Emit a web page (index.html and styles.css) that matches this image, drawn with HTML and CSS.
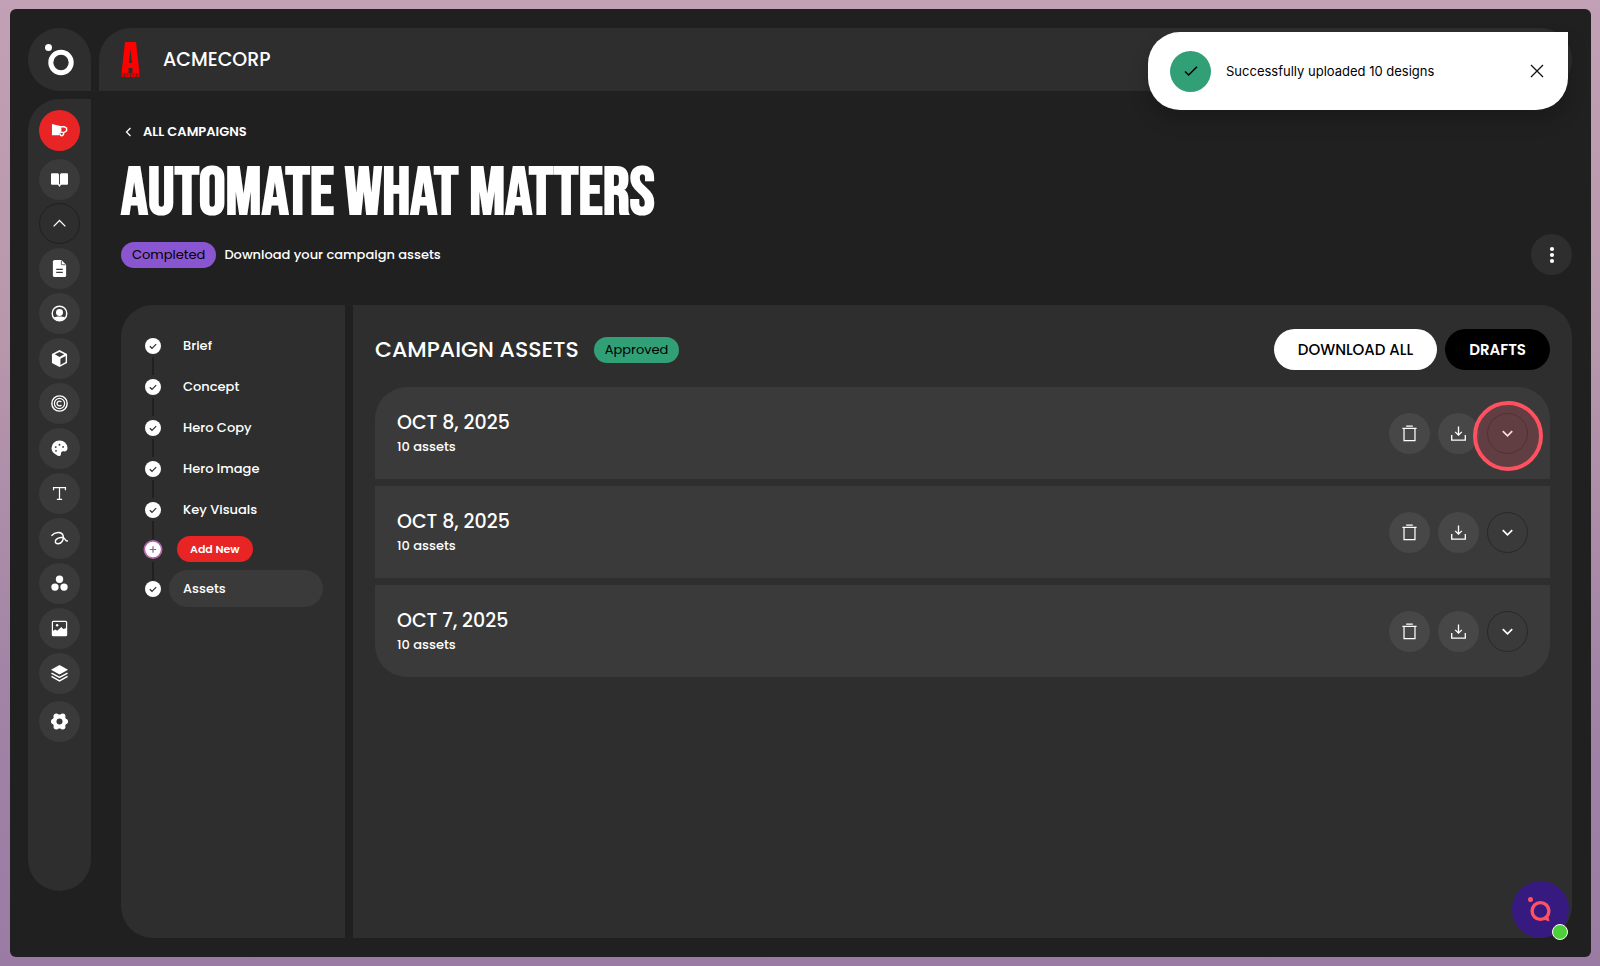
FILE: index.html
```html
<!DOCTYPE html>
<html lang="en">
<head>
    <meta charset="UTF-8">
    <meta name="viewport" content="width=device-width, initial-scale=1.0">
    <title>Automate what matters - AcmeCorp</title>
    <link rel="stylesheet" href="styles.css">
</head>
<body>
    <!-- shared icons -->
    <svg class="sprite" aria-hidden="true">
        <symbol id="icon-check" viewBox="0 0 16 16"><circle cx="8" cy="8" r="8" fill="#fff"/><path d="M4.8 8.2l2.2 2.1 4.2-4.2" fill="none" stroke="#2e2e2e" stroke-width="1.2"/></symbol>
        <symbol id="icon-trash" viewBox="0 0 18 18"><path d="M5.5 1.2h7M1.500 3.500h15M3.2 3.500v13h11.600v-13" fill="none" stroke="currentColor" stroke-width="1.3"/></symbol>
        <symbol id="icon-download" viewBox="0 0 18 18"><path d="M9 1.500v9M5.5 7.300L9 10.700l3.500-3.400M1.800 10.500V16h14.400v-5.500" fill="none" stroke="currentColor" stroke-width="1.4"/></symbol>
        <symbol id="icon-down" viewBox="0 0 18 18"><path d="M4 6.500l5 5 5-5" fill="none" stroke="currentColor" stroke-width="1.800"/></symbol>
    </svg>

    <div class="window">
        <aside class="rail">
            <a class="brand" href="#" aria-label="Home">
                <svg width="30" height="34" viewBox="0 0 30 34"><circle cx="3.500" cy="4.500" r="3.500" fill="#fff"/><circle cx="16" cy="19.500" r="10.200" fill="none" stroke="#fff" stroke-width="5"/></svg>
            </a>
            <nav class="side-nav">
                <a class="nav-item active" href="#" aria-label="Campaigns">
                    <svg viewBox="0 0 18 18"><path d="M1 2l10 2.500v6.500L9 12v2H1z" fill="#fff"/><path d="M10.500 5h3.500l2.500 1.500v3L14 11h-3.500M9.500 12c0 3.500 4 3.500 4-.5" fill="none" stroke="#fff" stroke-width="1.500"/></svg>
                </a>
                <a class="nav-item" href="#" aria-label="Library">
                    <svg viewBox="0 0 18 18"><path d="M1 2.500h5.500C7.700 2.500 8.500 3.200 8.500 4.500v10H1a1 1 0 0 1-1-1v-10a1 1 0 0 1 1-1zM17 2.500h-5.500c-1.200 0-2 .7-2 2v10H17a1 1 0 0 0 1-1v-10a1 1 0 0 0-1-1z" fill="#fff"/><path d="M7 14h4l-2 3z" fill="#fff"/></svg>
                </a>
                <div class="nav-group">
                    <button class="nav-item outline" type="button" aria-label="Collapse library">
                        <svg viewBox="0 0 18 18"><path d="M2.800 12L9 5.800l6.200 6.200" fill="none" stroke="#fff" stroke-width="1.300"/></svg>
                    </button>
                    <a class="nav-item" href="#" aria-label="Documents">
                        <svg viewBox="0 0 18 18"><path d="M3.500 0h7.500l5 5v12l-1 1H3l-1-1V1z" fill="#fff"/><path d="M5.500 10h7M5.500 13h7" stroke="#3a3a3a" stroke-width="1.300"/><path d="M11 .5v4.500h4.500" fill="none" stroke="#3a3a3a" stroke-width=".8"/></svg>
                    </a>
                    <a class="nav-item" href="#" aria-label="Audience">
                        <svg viewBox="0 0 18 18"><circle cx="9" cy="9" r="7.700" fill="none" stroke="#fff" stroke-width="1.500"/><circle cx="9" cy="8" r="3.700" fill="#fff"/><path d="M3 13.200c3-1.500 9-1.500 12 0-2.500 4-9.500 4-12 0z" fill="#fff"/></svg>
                    </a>
                    <a class="nav-item" href="#" aria-label="Products">
                        <svg viewBox="0 0 18 18"><path d="M9 0l8 4.300v9.400L9 18l-8-4.300V4.300z" fill="#fff"/><path d="M4 4.600l5-2.600 5 2.600-5 2.700zM10 9.200l5.500-2.900v6.500L10 15.800z" fill="#3a3a3a"/></svg>
                    </a>
                    <a class="nav-item" href="#" aria-label="Copyright">
                        <svg viewBox="0 0 18 18"><circle cx="9" cy="9" r="8.100" fill="none" stroke="#fff" stroke-width="1.500"/><circle cx="9" cy="9" r="5.400" fill="none" stroke="#fff" stroke-width="1.300"/><path d="M11 7.600a2.500 2.500 0 1 0 0 2.800" fill="none" stroke="#fff" stroke-width="1.400"/></svg>
                    </a>
                    <a class="nav-item" href="#" aria-label="Colours">
                        <svg viewBox="0 0 18 18"><path d="M9 .5a8.300 8.300 0 0 1 8.500 8c0 3-2 3.800-4 3.500-2.500-.3-2.800 1-3 3-.3 2.500-2.700 2.500-5 .5A8.500 8.500 0 0 1 .5 9 8.300 8.300 0 0 1 9 .5z" fill="#fff"/><g fill="#3a3a3a"><circle cx="5" cy="7.500" r="1"/><circle cx="9" cy="5" r="1"/><circle cx="12.800" cy="7.300" r="1"/><circle cx="5.300" cy="11.500" r="1"/></g></svg>
                    </a>
                    <a class="nav-item" href="#" aria-label="Typography">
                        <svg viewBox="0 0 18 18"><path d="M2.700 5.500V2.800h12.600v2.700M9 2.800v12.400M6.200 15.200h5.600" fill="none" stroke="#fff" stroke-width="1.300"/></svg>
                    </a>
                    <a class="nav-item" href="#" aria-label="Brand marks">
                        <svg viewBox="0 0 18 18"><path d="M.5 6C4 2 11.500 1 12.800 5.800c1.200 5-2 9-6 8.700-3-.4-3-4 .2-5.500C10.500 7 14 8 15 10c.6 1.300 1.500 1.800 3 1.500" fill="none" stroke="#fff" stroke-width="1.500"/></svg>
                    </a>
                    <a class="nav-item" href="#" aria-label="Elements">
                        <svg viewBox="0 0 18 18" fill="#fff"><circle cx="9" cy="4.500" r="3.900"/><circle cx="4.200" cy="12.800" r="3.900"/><circle cx="13.800" cy="12.800" r="3.900"/></svg>
                    </a>
                    <a class="nav-item" href="#" aria-label="Images">
                        <svg viewBox="0 0 18 18"><rect x="1.500" y="1.500" width="15" height="15" rx="1" fill="none" stroke="#fff" stroke-width="1.300"/><path d="M1.500 12l3-2 2 1.500 4.500-4 2 2 3.500-1v8h-15z" fill="#fff"/><circle cx="6.500" cy="5.500" r="1.300" fill="#fff"/></svg>
                    </a>
                    <a class="nav-item" href="#" aria-label="Templates">
                        <svg viewBox="0 0 18 18"><path d="M9 0l9 5-9 5-9-5z" fill="#fff"/><path d="M.5 8.500L9 13.200l8.500-4.700M.5 12L9 16.800 17.500 12" fill="none" stroke="#fff" stroke-width="1.500"/></svg>
                    </a>
                </div>
                <a class="nav-item" href="#" aria-label="Settings">
                    <svg viewBox="0 0 18 18"><g fill="#fff"><circle cx="9" cy="9" r="7.500"/><circle cx="5.600" cy="3.500" r="2.900"/><circle cx="12.400" cy="3.500" r="2.900"/><circle cx="15.100" cy="9" r="2.900"/><circle cx="12.400" cy="14.500" r="2.900"/><circle cx="5.600" cy="14.500" r="2.900"/><circle cx="2.900" cy="9" r="2.900"/></g><circle cx="9" cy="9" r="3.200" fill="#3a3a3a"/></svg>
                </a>
            </nav>
        </aside>

        <div class="content">
            <header class="topbar">
                <svg width="20" height="36" viewBox="0 0 20 36" aria-hidden="true"><path d="M4 0h11l3.500 31H.5z" fill="#f00"/><path d="M9.500 7l1.500 14H8z" fill="#2e2e2e"/><path d="M7.500 26h4v5h-4z" fill="#2e2e2e"/><path d="M.5 33h18" stroke="#d00" stroke-width="4" stroke-dasharray="2.500 .6"/></svg>
                <span class="company">ACMECORP</span>
            </header>

            <main>
                <a class="back" href="#">
                    <svg width="14" height="14" viewBox="0 0 14 14"><path d="M9.500 3l-4 4 4 4" fill="none" stroke="#fff" stroke-width="1.300"/></svg>
                    ALL CAMPAIGNS
                </a>
                <h1>AUTOMATE WHAT MATTERS</h1>
                <div class="status">
                    <span class="badge completed">Completed</span>
                    <span class="status-text">Download your campaign assets</span>
                    <button class="round more" type="button" aria-label="More options">
                        <svg width="18" height="18" viewBox="0 0 18 18" fill="#fff"><circle cx="9" cy="3" r="2.100"/><circle cx="9" cy="9" r="2.100"/><circle cx="9" cy="15" r="2.100"/></svg>
                    </button>
                </div>

                <div class="panels">
                    <ol class="steps">
                        <li><svg class="dot"><use href="#icon-check"/></svg><a href="#">Brief</a></li>
                        <li><svg class="dot"><use href="#icon-check"/></svg><a href="#">Concept</a></li>
                        <li><svg class="dot"><use href="#icon-check"/></svg><a href="#">Hero Copy</a></li>
                        <li><svg class="dot"><use href="#icon-check"/></svg><a href="#">Hero Image</a></li>
                        <li><svg class="dot"><use href="#icon-check"/></svg><a href="#">Key Visuals</a></li>
                        <li class="add">
                            <svg class="dot plus" viewBox="0 0 18 18"><circle cx="9" cy="9" r="8.200" fill="#fff" stroke="#b565a7" stroke-width="1.600"/><path d="M9 6v6M6 9h6" stroke="#a0508f" stroke-width="1.100"/></svg>
                            <button type="button">Add New</button>
                        </li>
                        <li class="current"><svg class="dot"><use href="#icon-check"/></svg><a href="#">Assets</a></li>
                    </ol>

                    <section class="assets">
                        <div class="assets-head">
                            <h2>CAMPAIGN ASSETS</h2>
                            <span class="badge approved">Approved</span>
                            <div class="actions">
                                <button class="btn light" type="button">DOWNLOAD ALL</button>
                                <button class="btn dark" type="button">DRAFTS</button>
                            </div>
                        </div>
                        <div class="asset-list">
                            <article class="asset">
                                <div class="asset-info">
                                    <h3>OCT 8, 2025</h3>
                                    <p>10 assets</p>
                                </div>
                                <div class="actions">
                                    <button class="round" type="button" aria-label="Delete"><svg><use href="#icon-trash"/></svg></button>
                                    <button class="round" type="button" aria-label="Download"><svg><use href="#icon-download"/></svg></button>
                                    <button class="round outline" type="button" aria-label="Expand"><svg><use href="#icon-down"/></svg><span class="click-ring"></span></button>
                                </div>
                            </article>
                            <article class="asset">
                                <div class="asset-info">
                                    <h3>OCT 8, 2025</h3>
                                    <p>10 assets</p>
                                </div>
                                <div class="actions">
                                    <button class="round" type="button" aria-label="Delete"><svg><use href="#icon-trash"/></svg></button>
                                    <button class="round" type="button" aria-label="Download"><svg><use href="#icon-download"/></svg></button>
                                    <button class="round outline" type="button" aria-label="Expand"><svg><use href="#icon-down"/></svg></button>
                                </div>
                            </article>
                            <article class="asset">
                                <div class="asset-info">
                                    <h3>OCT 7, 2025</h3>
                                    <p>10 assets</p>
                                </div>
                                <div class="actions">
                                    <button class="round" type="button" aria-label="Delete"><svg><use href="#icon-trash"/></svg></button>
                                    <button class="round" type="button" aria-label="Download"><svg><use href="#icon-download"/></svg></button>
                                    <button class="round outline" type="button" aria-label="Expand"><svg><use href="#icon-down"/></svg></button>
                                </div>
                            </article>
                        </div>
                    </section>
                </div>
            </main>
        </div>

        <div class="toast" role="status">
            <span class="toast-icon"><svg width="18" height="18" viewBox="0 0 18 18"><path d="M3 9.500l3.700 3.500L15 4.800" fill="none" stroke="#000" stroke-width="1.600"/></svg></span>
            <span class="toast-text">Successfully uploaded 10 designs</span>
            <button class="toast-close" type="button" aria-label="Close"><svg width="18" height="18" viewBox="0 0 18 18"><path d="M3 3l12 12M15 3L3 15" stroke="#111" stroke-width="1.300"/></svg></button>
        </div>

        <button class="chat" type="button" aria-label="Open chat">
            <svg width="26" height="28" viewBox="0 0 26 28"><circle cx="2.500" cy="3.500" r="2.500" fill="#ff5161"/><circle cx="12.500" cy="15" r="8.400" fill="none" stroke="#ff5161" stroke-width="3.400"/><path d="M14 23l6-4 1.500 6.500z" fill="#ff5161"/></svg>
            <span class="online"></span>
        </button>
    </div>
</body>
</html>
```
FILE: styles.css
```css
* {
    box-sizing: border-box;
}
body {
    margin: 0;
    min-height: 100vh;
    display: flex;
    padding: 9px 9px 9px 10px;
    background: linear-gradient(180deg, #c2a0b5 0%, #b797ab 35%, #a284a6 70%, #9a7ba3 100%);
    font-family: Poppins, Inter, sans-serif;
    font-size: 13px;
    font-weight: 500;
    line-height: 20px;
    color: #fff;
}
a {
    color: inherit;
    text-decoration: none;
}
button {
    border: none;
    padding: 0;
    font: inherit;
    color: inherit;
    cursor: pointer;
}
h1, h2, h3, p, ol {
    margin: 0;
    padding: 0;
}
.sprite {
    display: none;
}
.window {
    position: relative;
    flex: 1;
    display: flex;
    gap: 8px;
    padding: 19px 19px 19px 18px;
    background: #202020;
    border-radius: 6px;
}

/* left rail */
.rail {
    width: 63px;
    display: flex;
    flex-direction: column;
    gap: 8px;
}
.brand {
    height: 63px;
    display: flex;
    align-items: center;
    justify-content: center;
    background: #2e2e2e;
    border-radius: 32px 32px 0 32px;
}
.side-nav {
    flex: 1;
    display: flex;
    flex-direction: column;
    align-items: center;
    gap: 8px;
    margin-bottom: 47px;
    padding-top: 11px;
    background: #2e2e2e;
    border-radius: 32px 0 32px 32px;
}
.nav-group {
    display: flex;
    flex-direction: column;
    gap: 4px;
    margin: -5px 0 -1px;
}
.nav-item, .round {
    position: relative;
    width: 41px;
    height: 41px;
    display: flex;
    align-items: center;
    justify-content: center;
    border-radius: 50%;
    background: #3a3a3a;
}
.nav-item svg {
    width: 17px;
    height: 17px;
}
.nav-item.active {
    background: #e82424;
}
.nav-item.outline {
    background: none;
    border: 1px solid #202020;
}

/* header */
.content {
    flex: 1;
    display: flex;
    flex-direction: column;
}
.topbar {
    height: 63px;
    display: flex;
    align-items: center;
    gap: 22px;
    padding: 0 22px;
    background: #2e2e2e;
    border-radius: 32px 32px 32px 0;
}
.company {
    font-size: 19px;
}
main {
    flex: 1;
    display: flex;
    flex-direction: column;
    padding: 31px 0 0 22px;
}
.back {
    display: flex;
    align-items: center;
    gap: 8px;
    font-weight: 600;
}
h1 {
    margin-top: 22px;
    font-family: "Bebas Neue", "Roboto Condensed", Roboto, sans-serif;
    font-size: 67px;
    line-height: 60px;
    font-weight: 700;
    white-space: nowrap;
}
.status {
    display: flex;
    align-items: center;
    gap: 8px;
    margin-top: 10px;
}
.badge {
    height: 26px;
    padding: 0 11px;
    border-radius: 13px;
    font-size: 13px;
    font-weight: 400;
    line-height: 26px;
    color: #000;
}
.completed {
    background: #8a55d0;
}
.approved {
    background: #31a077;
}
.more {
    margin-left: auto;
    background: #2e2e2e;
}

/* panels */
.panels {
    flex: 1;
    display: flex;
    gap: 8px;
    margin-top: 30px;
}
.steps {
    width: 224px;
    display: flex;
    flex-direction: column;
    gap: 4px;
    padding: 22px;
    list-style: none;
    background: #2e2e2e;
    border-radius: 32px 0 0 32px;
}
.steps li {
    position: relative;
    display: flex;
    align-items: center;
    gap: 6px;
    height: 37px;
}
.steps li:not(:last-child)::after {
    content: "";
    position: absolute;
    left: 9px;
    top: 30px;
    width: 2px;
    height: 18px;
    background: #202020;
}
.dot {
    width: 20px;
    height: 16px;
    flex: none;
}
.dot.plus {
    height: 19px;
}
.steps a {
    flex: 1;
    padding: 0 14px;
    border-radius: 19px;
    line-height: 37px;
}
.current a {
    background: #3a3a3a;
}
.steps .add {
    height: 34px;
    gap: 14px;
}
.steps .add button {
    height: 26px;
    padding: 0 13px;
    border-radius: 13px;
    background: #e82424;
    font-size: 11px;
    font-weight: 600;
}
.assets {
    flex: 1;
    padding: 24px 22px;
    background: #2e2e2e;
    border-radius: 0 32px 32px 0;
}
.assets-head {
    display: flex;
    align-items: center;
    gap: 15px;
    margin-bottom: 17px;
}
h2 {
    font-size: 22px;
    line-height: 32px;
    font-weight: 500;
}
.actions {
    display: flex;
    gap: 8px;
    margin-left: auto;
}
.btn {
    height: 41px;
    padding: 0 24px;
    border-radius: 21px;
    font-size: 15px;
    font-weight: 500;
}
.light {
    background: #fff;
    color: #000;
}
.dark {
    background: #000;
    font-weight: 600;
}
.asset-list {
    display: flex;
    flex-direction: column;
    gap: 7px;
}
.asset {
    display: flex;
    align-items: center;
    height: 92px;
    padding: 0 22px;
    background: #3a3a3a;
}
.asset:first-child {
    border-radius: 32px 32px 0 0;
}
.asset:last-child {
    border-radius: 0 0 32px 32px;
}
h3 {
    font-size: 19px;
    line-height: 28px;
    font-weight: 500;
}
.asset .round {
    background: #474747;
}
.asset .round svg {
    width: 17px;
    height: 17px;
}
.asset .round.outline {
    background: none;
    border: 1px solid #282828;
}
.click-ring {
    position: absolute;
    top: -13px;
    left: -15px;
    width: 70px;
    height: 70px;
    border: 4px solid #ff5161;
    border-radius: 50%;
    background: rgba(255, 81, 97, 0.2);
}

/* toast and chat, over the page */
.toast {
    position: absolute;
    top: 23px;
    right: 23px;
    width: 420px;
    height: 78px;
    display: flex;
    align-items: center;
    gap: 15px;
    padding: 0 22px;
    background: #fff;
    color: #000;
    border-radius: 32px 0 32px 32px;
    box-shadow: 0 10px 20px rgba(0, 0, 0, 0.2);
}
.toast-icon {
    width: 41px;
    height: 41px;
    display: flex;
    align-items: center;
    justify-content: center;
    border-radius: 50%;
    background: #31a077;
}
.toast-text {
    font-family: Inter, sans-serif;
    font-weight: 400;
}
.toast-close {
    display: flex;
    margin-left: auto;
    background: none;
}
.chat {
    position: absolute;
    right: 22px;
    bottom: 19px;
    width: 57px;
    height: 57px;
    display: flex;
    align-items: center;
    justify-content: center;
    border-radius: 50%;
    background: #371a80;
}
.online {
    position: absolute;
    right: 1px;
    bottom: -2px;
    width: 16px;
    height: 16px;
    border: 1px solid #fff;
    border-radius: 50%;
    background: #4ccf38;
}
```
